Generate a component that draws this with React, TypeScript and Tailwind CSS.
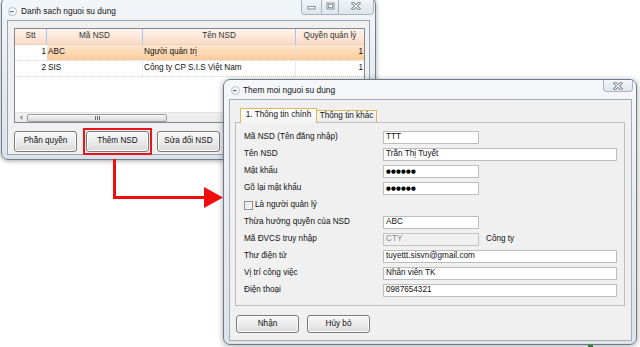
import React from "react";

function WinIcon() {
  return (
    <svg width="9" height="9" viewBox="0 0 9 9">
      <circle cx="4.5" cy="4.5" r="4" fill="#f8fafc" stroke="#a3aebb" strokeWidth="0.8" />
      <rect x="2" y="4" width="3.6" height="1.2" fill="#5d6b7d" />
    </svg>
  );
}

function CloseGlyph() {
  return (
    <svg width="10" height="8" viewBox="0 0 10 8">
      <path d="M2 1.2 L8 6.8 M8 1.2 L2 6.8" stroke="#7c8795" strokeWidth="3" strokeLinecap="square" />
      <path d="M2 1.2 L8 6.8 M8 1.2 L2 6.8" stroke="#ffffff" strokeWidth="1.1" strokeLinecap="square" />
    </svg>
  );
}

function MinGlyph() {
  return (
    <svg width="9" height="8" viewBox="0 0 9 8">
      <rect x="1" y="4.5" width="7" height="2.5" fill="#fff" stroke="#7c8795" strokeWidth="0.9" />
    </svg>
  );
}

function MaxGlyph() {
  return (
    <svg width="9" height="8" viewBox="0 0 9 8">
      <rect x="1" y="1" width="7" height="6" fill="none" stroke="#7c8795" strokeWidth="0.9" />
      <rect x="2.5" y="2.6" width="4" height="3" fill="#fff" stroke="#7c8795" strokeWidth="0.8" />
    </svg>
  );
}

function Btn({ children, w, h, className = "" }: { children: React.ReactNode; w: string; h: string; className?: string }) {
  return (
    <div
      className={`${w} ${h} ${className} flex items-center justify-center rounded-[3px] border border-[#7a7a7a] bg-gradient-to-b from-[#f7f7f7] via-[#ececec] to-[#d9d9d9] shadow-[inset_0_0_0_1px_#fbfbfb] text-[#111]`}
    >
      {children}
    </div>
  );
}

function Input({ value, long, disabled, password }: { value: string; long?: boolean; disabled?: boolean; password?: boolean }) {
  return (
    <div
      className={`${long ? "w-[234px]" : "w-[96px]"} h-[13px] border ${disabled ? "border-[#c4c4c4] bg-[#f0f0f0] text-[#8a8a8a]" : "border-[#bdbdbd] bg-white text-[#111]"} pl-[2px] flex items-center leading-none`}
    >
      {password ? (
        <span className="font-['DejaVu_Sans',sans-serif] text-[5.5px] tracking-[0.2px] text-black">●●●●●●</span>
      ) : (
        value
      )}
    </div>
  );
}

function Row({ label, children }: { label: React.ReactNode; children?: React.ReactNode }) {
  return (
    <div className="h-[17px] flex items-center">
      <div className="w-[139px] shrink-0">{label}</div>
      {children}
    </div>
  );
}

export default function App() {
  const rows = [
    { stt: "1", ma: "ABC", ten: "Người quản trị", q: "1", sel: true },
    { stt: "2", ma: "SIS", ten: "Công ty CP S.I.S Việt Nam", q: "1", sel: false },
  ];
  return (
    <div className="relative w-[640px] h-[347px] overflow-hidden bg-white font-['Liberation_Sans',Arial,sans-serif] text-[8.2px] text-[#111]">
      {/* green bit behind window 2 */}
      <div className="absolute left-[588px] top-[340px] w-[5px] h-[7px] bg-[#3f9a2c]" />

      {/* Window 1 */}
      <div className="absolute left-[1px] top-[-3px] w-[375px] h-[163px] rounded-[7px] border border-[#6f7d8f] bg-gradient-to-b from-[#f3f6f9] via-[#e6ebf0] to-[#dbe2ea] shadow-[0_1px_5px_rgba(0,0,0,0.35)] flex flex-col">
        <div className="h-[22px] flex justify-between pl-[6px] pr-[1px]">
          <div className="flex items-center gap-[4px] pt-[4px] text-[8.4px] text-[#111]">
            <WinIcon />
            <span>Danh sach nguoi su dung</span>
          </div>
          <div className="flex h-[17px] rounded-b-[4px] border border-t-0 border-[#a9b3bf] overflow-hidden bg-gradient-to-b from-[#f4f6f9] to-[#dfe5ec]">
            <div className="w-[20px] flex items-center justify-center border-r border-[#a9b3bf]"><MinGlyph /></div>
            <div className="w-[17px] flex items-center justify-center border-r border-[#a9b3bf]"><MaxGlyph /></div>
            <div className="w-[34px] flex items-center justify-center"><CloseGlyph /></div>
          </div>
        </div>
        <div className="flex-1 mx-[5px] mb-[4px] border border-[#99a3ae] bg-[#f0f0f0] pt-[7px] pl-[6px] pr-[4px] flex flex-col">
          <div className="h-[95px] w-full border border-[#828790] bg-white flex flex-col overflow-hidden">
            <div className="h-[16px] flex bg-gradient-to-b from-[#fef4ec] to-[#f9dcc7] border-b border-[#f0d0b8] text-[#333]">
              <div className="w-[32px] flex items-center justify-center border-r border-[#a8c6e6]">Stt</div>
              <div className="w-[96px] flex items-center justify-center border-r border-[#a8c6e6]">Mã NSD</div>
              <div className="w-[153px] flex items-center justify-center border-r border-[#a8c6e6]">Tên NSD</div>
              <div className="flex-1 flex items-center justify-center">Quyền quản lý</div>
            </div>
            {rows.map((r) => (
              <div key={r.stt} className="h-[16px] flex border-b border-dotted border-[#d6d6d6]">
                <div className="w-[32px] flex items-center justify-end pr-[1px] bg-white">{r.stt}</div>
                <div className={`flex-1 flex ${r.sel ? "bg-gradient-to-b from-[#fde6cf] to-[#fbcb98]" : ""}`}>
                  <div className="w-[96px] flex items-center pl-[1px] border-r border-dotted border-[#dcdcdc]">{r.ma}</div>
                  <div className="w-[153px] flex items-center pl-[1px] border-r border-dotted border-[#dcdcdc]">{r.ten}</div>
                  <div className="flex-1 flex items-center justify-end pr-[1px]">{r.q}</div>
                </div>
              </div>
            ))}
            <div className="flex-1" />
            <div className="h-[10px] flex items-center bg-gradient-to-b from-[#f1f1f1] to-[#e9e9e9] border-t border-[#e3e3e3]">
              <div className="w-[12px] flex items-center justify-center">
                <svg width="4" height="5" viewBox="0 0 4 5"><path d="M3.5 0 L0.5 2.5 L3.5 5 Z" fill="#9a9a9a" /></svg>
              </div>
              <div className="w-[140px] h-[8px] rounded-[2px] border border-[#9d9d9d] bg-gradient-to-b from-[#f7f7f7] to-[#d9d9d9] flex items-center justify-center gap-[1px]">
                <div className="w-[1px] h-[4px] bg-[#6d6d6d]" />
                <div className="w-[1px] h-[4px] bg-[#6d6d6d]" />
                <div className="w-[1px] h-[4px] bg-[#6d6d6d]" />
              </div>
            </div>
          </div>
          <div className="mt-[8px] flex">
            <Btn w="w-[63px]" h="h-[21px]">Phần quyền</Btn>
            <div className="ml-[9px] outline-2 outline-solid outline-[#e8141b] outline-offset-[1px]">
              <Btn w="w-[63px]" h="h-[21px]">Thêm NSD</Btn>
            </div>
            <Btn w="w-[63px]" h="h-[21px]" className="ml-[8px]">Sửa đổi NSD</Btn>
          </div>
        </div>
      </div>

      {/* Red arrow */}
      <svg className="absolute left-0 top-0" width="640" height="347" viewBox="0 0 640 347">
        <path d="M114.5 159 L114.5 197.5 L206 197.5" fill="none" stroke="#f20d0d" strokeWidth="3" />
        <path d="M204 187 L223 197.5 L204 208 Z" fill="#f20d0d" />
      </svg>

      {/* Window 2 */}
      <div className="absolute left-[223px] top-[79px] w-[414px] h-[266px] rounded-[7px] border border-[#6f7a88] bg-gradient-to-b from-[#f5f7fa] via-[#e7ecf1] to-[#dde3ea] shadow-[0_1px_6px_rgba(0,0,0,0.35)] flex flex-col">
        <div className="h-[19px] flex justify-between pl-[7px] pr-[3px]">
          <div className="flex items-center gap-[3px] pt-[2px] text-[8.4px] text-[#111]">
            <WinIcon />
            <span>Them moi nguoi su dung</span>
          </div>
          <div className="w-[30px] h-[12px] flex items-center justify-center rounded-b-[4px] border border-t-0 border-[#a9b3bf] bg-gradient-to-b from-[#f4f6f9] to-[#dfe5ec]">
            <CloseGlyph />
          </div>
        </div>
        <div className="flex-1 ml-[5px] mr-[4px] mb-[3px] border border-[#a3acb7] bg-[#f0f0f0] pt-[8px] pl-[5px] pr-[6px] flex flex-col">
          <div className="flex items-end h-[14px] ml-[5px]">
            <div className="relative z-10 w-[77px] h-[15px] -mb-[1px] border border-b-0 border-[#e2b45c] bg-gradient-to-b from-[#ffffff] to-[#f3f3f3] flex items-center justify-center pb-[1px]">
              1. Thông tin chính
            </div>
            <div className="w-[60px] h-[12px] border border-b-0 border-l-0 border-[#e2b45c] bg-gradient-to-b from-[#f7f7f7] to-[#ebebeb] flex items-center justify-center">
              Thông tin khác
            </div>
          </div>
          <div className="h-[184px] border border-[#bdbdbd] bg-[#f0f0f0] pt-[6px] pl-[8px] flex flex-col">
            <Row label="Mã NSD (Tên đăng nhập)"><Input value="TTT" /></Row>
            <Row label="Tên NSD"><Input value="Trần Thị Tuyết" long /></Row>
            <Row label="Mật khẩu"><Input value="" password /></Row>
            <Row label="Gõ lại mật khẩu"><Input value="" password /></Row>
            <div className="h-[17px] flex items-center">
              <div className="w-[9px] h-[9px] border border-[#8e8f8f] bg-gradient-to-br from-[#dcdcdc] to-[#ffffff] shadow-[inset_0_0_0_1px_#f4f4f4]" />
              <span className="ml-[2px]">Là người quản lý</span>
            </div>
            <Row label="Thừa hưởng quyền của NSD"><Input value="ABC" /></Row>
            <Row label="Mã ĐVCS truy nhập">
              <Input value="CTY" disabled />
              <span className="ml-[7px]">Công ty</span>
            </Row>
            <Row label="Thư điện tử"><Input value="tuyettt.sisvn@gmail.com" long /></Row>
            <Row label="Vị trí công việc"><Input value="Nhân viên TK" long /></Row>
            <Row label="Điện thoại"><Input value="0987654321" long /></Row>
          </div>
          <div className="mt-[9px] ml-[1px] flex gap-[8px]">
            <Btn w="w-[63px]" h="h-[18px]">Nhận</Btn>
            <Btn w="w-[63px]" h="h-[18px]">Hủy bỏ</Btn>
          </div>
        </div>
      </div>
    </div>
  );
}
